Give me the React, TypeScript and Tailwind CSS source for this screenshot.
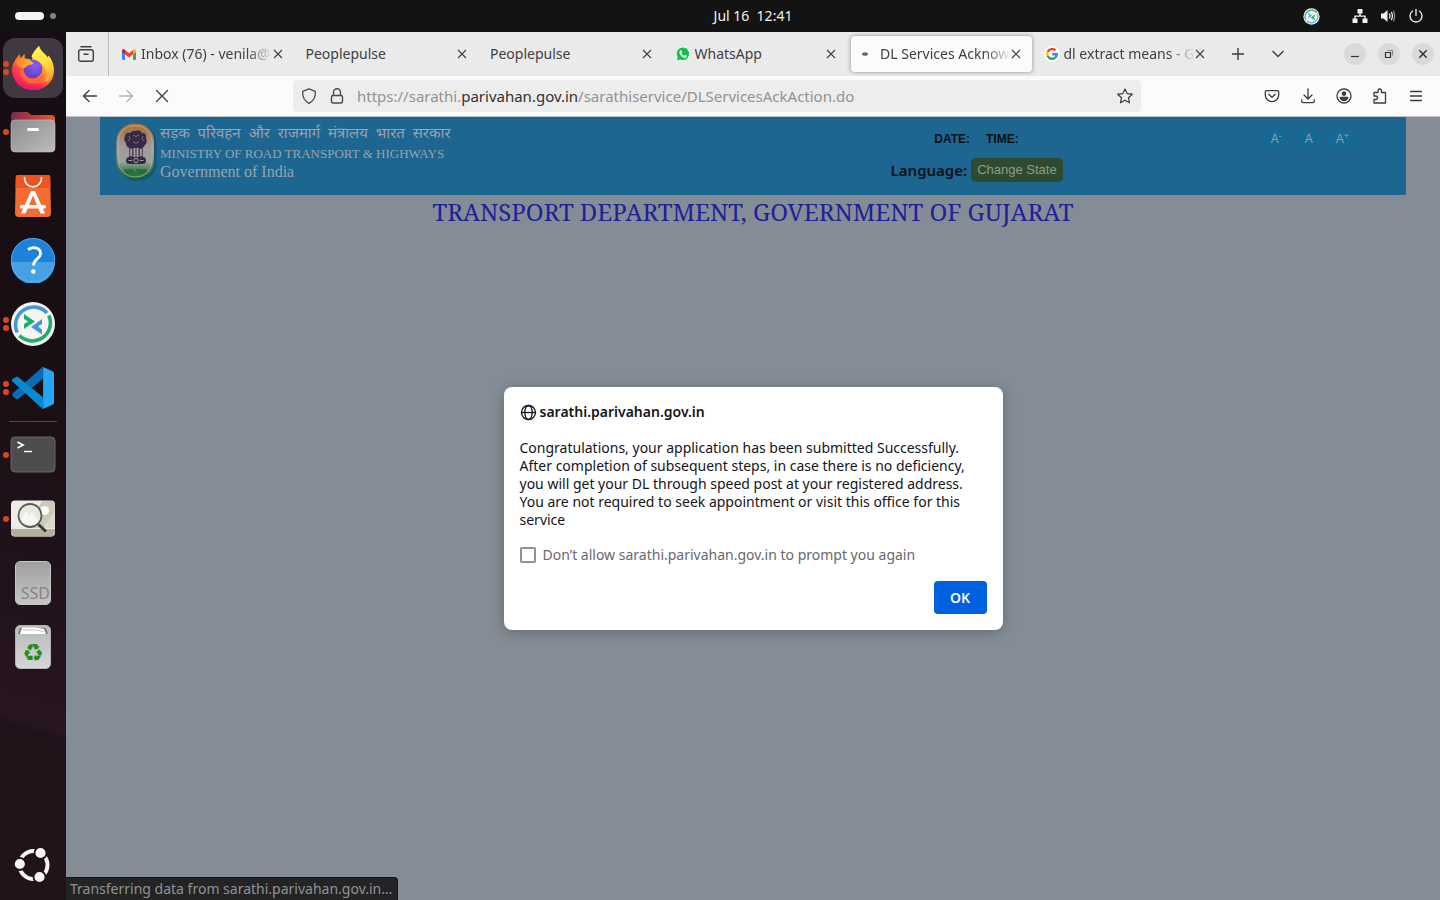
import { useState } from "react";
import type { ReactNode } from "react";

const ui = "font-['Noto_Sans','Open_Sans',sans-serif]";

function DockItem({ label, dots = 0, active = false, children }: { label: string; dots?: number; active?: boolean; children: ReactNode }) {
  return (
    <li className="relative">
      <button
        type="button"
        aria-label={label}
        className={`flex size-[60px] items-center justify-center rounded-xl ${active ? "bg-[#423841]" : ""}`}
      >
        {children}
      </button>
      <span className="absolute inset-y-0 left-0 flex flex-col justify-center gap-[2px]">
        {Array.from({ length: dots }, (_, i) => (
          <span key={i} className="size-[6px] rounded-full bg-[#d9481c]" />
        ))}
      </span>
    </li>
  );
}

function FirefoxIcon() {
  return (
    <svg width="46" height="46" viewBox="0 0 46 46" aria-hidden="true">
      <defs>
        <linearGradient id="fx-body" x1="0.9" y1="0.1" x2="0.2" y2="0.95">
          <stop offset="0" stopColor="#ffe84a" />
          <stop offset="0.3" stopColor="#ffb02e" />
          <stop offset="0.6" stopColor="#ff6a36" />
          <stop offset="0.85" stopColor="#fb2f50" />
          <stop offset="1" stopColor="#e6107a" />
        </linearGradient>
        <linearGradient id="fx-low" x1="0" y1="0" x2="0" y2="1">
          <stop offset="0.550" stopColor="#f5225c" stopOpacity="0" />
          <stop offset="1" stopColor="#e4127c" />
        </linearGradient>
        <radialGradient id="fx-globe" cx="0.62" cy="0.3" r="0.75">
          <stop offset="0" stopColor="#9059ff" />
          <stop offset="1" stopColor="#5a3fb5" />
        </radialGradient>
        <linearGradient id="fx-flame" x1="0.3" y1="0" x2="0.7" y2="1">
          <stop offset="0" stopColor="#fff652" />
          <stop offset="0.5" stopColor="#ffe040" />
          <stop offset="1" stopColor="#ffa42c" />
        </linearGradient>
        <linearGradient id="fx-head" x1="0" y1="0" x2="1" y2="0.5">
          <stop offset="0" stopColor="#ff6a2a" />
          <stop offset="1" stopColor="#ffb938" />
        </linearGradient>
      </defs>
      <path d="M9.500 9C9.500 11 10 12.500 11 13.300L14.500 9V13.500C17 13.500 20 14 22 15C22 9 26 5 29 1C30 6 36 9 38 13L38.500 10.500C42 15 44 20 44 25C44 37 35 45 23 45C11 45 2 36 2 25C2 21 3 18 5 15.500C6 13.500 8 11.500 9.500 9Z" fill="url(#fx-body)" />
      <path d="M2 25C2 36 11 45 23 45C35 45 44 37 44 25C42 33 34 38 25 38C14 38 6 32 2 25Z" fill="url(#fx-low)" />
      <path d="M29 1C30 6 36 9 38 13L38.500 10.500C43 16 45 24 41 31C39 35 37 36 35 37C38 31 36 24 33 20C30 16 24 15 21.500 11.500C23 7 26 4 29 1Z" fill="url(#fx-flame)" />
      <circle cx="23" cy="24" r="9.300" fill="url(#fx-globe)" />
      <path d="M14 20C12 25 14 33 22 34.500C28 35 32 31 33 28C34 35 28 39 22 38.500C13 38 9 30 11 22Z" fill="#ff6336" />
      <path d="M5 15.500C7 13 8.500 11 9.500 9C9.500 11 10 12.500 11 13.300L14.500 9V14C18 14 21 15.500 23.500 18.300C22.500 20 18.500 19.500 16.500 21.500C15 23 14 24 12 22.500C9 21.500 6 20 5 15.500Z" fill="url(#fx-head)" />
    </svg>
  );
}

function FilesIcon() {
  return (
    <svg width="46" height="44" viewBox="0 0 46 44" aria-hidden="true">
      <defs>
        <linearGradient id="files-back" x1="0" y1="0" x2="1" y2="0">
          <stop offset="0" stopColor="#7d2852" />
          <stop offset="1" stopColor="#ec5724" />
        </linearGradient>
        <linearGradient id="files-front" x1="0" y1="0" x2="1" y2="1">
          <stop offset="0" stopColor="#8b8b8b" />
          <stop offset="1" stopColor="#bdbdbd" />
        </linearGradient>
      </defs>
      <path d="M5 2H17C19 2 20 5 22 5H41Q45 5 45 9V20H1V6Q1 2 5 2Z" fill="url(#files-back)" />
      <rect x="1" y="10" width="44" height="32" rx="4" fill="url(#files-front)" stroke="#c4c4c4" strokeWidth="0.600" />
      <rect x="17" y="18" width="12" height="3" rx="1.500" fill="#fff" />
    </svg>
  );
}

function SoftwareIcon() {
  return (
    <svg width="38" height="44" viewBox="0 0 38 44" aria-hidden="true">
      <path d="M4 1H34Q36 1 36.200 3L37 39Q37 43 33 43H5Q1 43 1 39L1.800 3Q2 1 4 1Z" fill="#f26c34" />
      <path d="M4 1H34Q36 1 36.200 3L36.500 14H1.500L1.800 3Q2 1 4 1Z" fill="#ee5420" />
      <path d="M10.500 3.500C10.500 16 27.500 16 27.500 3.500" fill="none" stroke="#fff" strokeWidth="1.600" strokeLinecap="round" />
      <path d="M17 17H21L31 39.500H26.500L19 21.500L11.500 39.500H7Z" fill="#fff" />
      <rect x="6" y="31" width="26" height="3.600" rx="1.500" fill="#fff" />
    </svg>
  );
}

function HelpIcon() {
  return (
    <svg width="46" height="46" viewBox="0 0 46 46" aria-hidden="true">
      <circle cx="23" cy="23" r="22" fill="#1e82dc" />
      <path d="M1 25A22 22 0 0 0 45 25Z" fill="#45a0e4" />
      <circle cx="23" cy="23" r="21.600" fill="none" stroke="#5cb3ee" strokeWidth="0.800" />
      <path d="M18 12.500C24 9 30.500 11 30.500 16.500C30.500 22 23.500 22 23.500 28.500" fill="none" stroke="#fff" strokeWidth="2.800" />
      <circle cx="23.300" cy="34.500" r="2.300" fill="#fff" />
    </svg>
  );
}

function RemoteIcon({ size, flip = false }: { size: number; flip?: boolean }) {
  const upper = flip ? "#20ad72" : "#4695de";
  const lower = flip ? "#4ab0e4" : "#20ad72";
  return (
    <svg width={size} height={size} viewBox="0 0 46 46" aria-hidden="true">
      <circle cx="23" cy="23" r="22" fill="#f6f5f1" />
      <path d="M7.200 31.500A18 18 0 0 1 37 12" fill="none" stroke={upper} strokeWidth="3.600" />
      <path d="M38.800 14.500A18 18 0 0 1 9.500 34.500" fill="none" stroke={lower} strokeWidth="3.600" />
      <path d="M14 13L25 20.500L14 28V23L18 20.500L14 18Z" fill={lower} />
      <path d="M32 18V23L28 25.500L32 28.500V33.500L21 26Z" fill={upper} />
    </svg>
  );
}

function CodeIcon() {
  return (
    <svg width="44" height="44" viewBox="0 0 44 44" aria-hidden="true">
      <path d="M31.500 1L1.500 27.500V30L5 33Q6 33.500 7 33L33 12Z" fill="#0a6cb3" />
      <path d="M31.500 43L1 15V13.500L5 11Q6 10.500 7 11L33 32Z" fill="#0789d2" />
      <path d="M32 1L42 5.500Q43 6 43 7.500V36.500Q43 38 42 38.500L32 43Z" fill="#28a5ef" />
      <path d="M30 1.500Q32.500 1 32.500 3.500V41Q32.500 43.500 30 42.500L33 43V1Z" fill="#1785cc" />
    </svg>
  );
}

function TerminalIcon() {
  return (
    <svg width="46" height="38" viewBox="0 0 46 38" aria-hidden="true">
      <rect x="1" y="1" width="44" height="35" rx="4" fill="#4d4d4d" stroke="#686868" />
      <path d="M7.500 6L13 9L7.500 12" fill="none" stroke="#fff" strokeWidth="1.800" />
      <path d="M14 15.500H22" stroke="#fff" strokeWidth="1.400" />
    </svg>
  );
}

function ViewerIcon() {
  return (
    <svg width="46" height="40" viewBox="0 0 46 40" aria-hidden="true">
      <rect x="1" y="1.500" width="44" height="36" rx="4" fill="#eeede5" />
      <path d="M32 2H41Q45 2 45 6V29H17Z" fill="#cdcabc" />
      <path d="M45 12V29H33Z" fill="#dcdacf" />
      <path d="M1 30H45V33.500Q45 37.500 41 37.500H5Q1 37.500 1 33.500Z" fill="#b5af9d" />
      <circle cx="34.500" cy="11.500" r="4.500" fill="#fafaf7" />
      <circle cx="20" cy="16.500" r="11.500" fill="#e8e8e4" />
      <path d="M10 22L16 12L19 17L22 13L29 23Q21 31 10 22Z" fill="#fff" opacity="0.600" />
      <circle cx="20" cy="16.500" r="11.500" fill="none" stroke="#5b5b5b" strokeWidth="1.800" />
      <path d="M28.500 25.500L36 32.500" stroke="#3b3b3b" strokeWidth="3" />
    </svg>
  );
}

function DriveIcon() {
  return (
    <span className="flex h-[44px] w-[36px] items-end justify-end rounded-[5px] border border-[#c4c4c4] bg-linear-to-b from-[#a0a0a0] to-[#c6c6c6] text-base leading-[21px] text-[#858585]">
      SSD
    </span>
  );
}

function TrashIcon() {
  return (
    <span className="flex h-[44px] w-[36px] flex-col items-center rounded-[5px] border border-[#b4b4b4] bg-linear-to-b from-[#bababa] to-[#d6d6d6]">
      <svg width="30" height="9" viewBox="0 0 30 9" aria-hidden="true">
        <path d="M0 8L2 2H28L30 8Z" fill="#7a7a7a" />
        <path d="M2 8L4 1.500H17L26 3L28 8Z" fill="#fff" />
        <path d="M5 4H17L26 5.500" fill="none" stroke="#aaa" strokeWidth="0.700" />
      </svg>
      <span className="pt-[3px] font-['DejaVu_Sans',sans-serif] text-[24px] leading-[30px] text-[#278a20]">♻</span>
    </span>
  );
}

function UbuntuIcon() {
  return (
    <svg width="40" height="40" viewBox="0 0 40 40" aria-hidden="true">
      <circle cx="20.500" cy="20" r="14" fill="none" stroke="#f4f4f4" strokeWidth="4" />
      <g fill="#f4f4f4" stroke="#21131a" strokeWidth="1.800">
        <circle cx="6.800" cy="19" r="6" />
        <circle cx="27.500" cy="8" r="6" />
        <circle cx="26.500" cy="32" r="6" />
      </g>
    </svg>
  );
}

function Dock() {
  return (
    <nav
      aria-label="Dock"
      className={`${ui} flex w-[66px] shrink-0 flex-col items-center bg-[linear-gradient(197deg,#170c12_0%,#1a0f15_42%,#27151f_79%,#1f1219_80%,#21131a_100%)] pt-[6px] pb-[5px]`}
    >
      <ul className="flex flex-col gap-1">
        <DockItem label="Firefox" active dots={2}><FirefoxIcon /></DockItem>
        <DockItem label="Files" dots={1}><FilesIcon /></DockItem>
        <DockItem label="App Center"><SoftwareIcon /></DockItem>
        <DockItem label="Help"><HelpIcon /></DockItem>
        <DockItem label="Remote desktop" dots={2}><RemoteIcon size={46} /></DockItem>
        <DockItem label="Code" dots={2}><CodeIcon /></DockItem>
      </ul>
      <div className="my-[3px] h-px w-12 bg-[#51474d]" />
      <ul className="flex flex-col gap-1">
        <DockItem label="Terminal" dots={1}><TerminalIcon /></DockItem>
        <DockItem label="Image viewer" dots={1}><ViewerIcon /></DockItem>
        <DockItem label="SSD drive"><DriveIcon /></DockItem>
        <DockItem label="Trash"><TrashIcon /></DockItem>
      </ul>
      <ul className="mt-auto"><DockItem label="Show apps"><UbuntuIcon /></DockItem></ul>
    </nav>
  );
}

function TopBar() {
  return (
    <header className={`${ui} grid h-8 shrink-0 grid-cols-[1fr_auto_1fr] items-center bg-[#131313] text-[#f2f2f2]`}>
      <div className="flex items-center gap-[6px] pl-[15px]">
        <span className="h-2 w-[29px] rounded-full bg-[#f4f4f4]" />
        <span className="size-[6px] rounded-full bg-[#828282]" />
      </div>
      <time className="pl-[66px] text-sm leading-[18px] whitespace-pre">Jul 16  12:41</time>
      <div className="flex items-center justify-end gap-3 pr-4">
        <span className="mr-5"><RemoteIcon size={17} flip /></span>
        <svg width="16" height="16" viewBox="0 0 16 16" fill="#f2f2f2" aria-hidden="true">
          <path d="M5.500 1H10.500V5.500H8.700V7.500H13.700V10.500H15.500V15H10.500V10.500H12.300V8.800H3.700V10.500H5.500V15H.5V10.500H2.300V7.500H7.300V5.500H5.500Z" />
        </svg>
        <svg width="16" height="16" viewBox="0 0 16 16" aria-hidden="true">
          <path d="M1 5.500H3.500L7.500 2V14L3.500 10.500H1Z" fill="#f2f2f2" />
          <path d="M9.300 5.500Q10.800 8 9.300 10.500M11.300 4Q13.500 8 11.300 12" fill="none" stroke="#f2f2f2" strokeWidth="1.300" />
          <path d="M13.300 2.800Q16 8 13.300 13.200" fill="none" stroke="#909090" strokeWidth="1.200" />
        </svg>
        <svg width="16" height="16" viewBox="0 0 16 16" fill="none" stroke="#f2f2f2" strokeWidth="1.300" aria-hidden="true">
          <path d="M8 1V8M5 2.800A6 6 0 1 0 11 2.800" />
        </svg>
      </div>
    </header>
  );
}

function CloseGlyph() {
  return (
    <svg width="10" height="10" viewBox="0 0 10 10" fill="none" stroke="#3f3f3f" strokeWidth="1.100" aria-hidden="true">
      <path d="M1 1L9 9M9 1L1 9" />
    </svg>
  );
}

function GmailIcon() {
  return (
    <svg width="14" height="11" viewBox="0 0 14 11" aria-hidden="true">
      <path d="M0 2V10Q0 11 1 11H3V4.500Z" fill="#4285f4" />
      <path d="M14 2V10Q14 11 13 11H11V4.500Z" fill="#34a853" />
      <path d="M3 1V5.300L7 8.400L11 5.300V1L7 4.200Z" fill="#ea4335" />
      <path d="M0 2Q0 0 1.600 0L3 1V5.300L0 3Z" fill="#c5221f" />
      <path d="M14 2Q14 0 12.400 0L11 1V5.300L14 3Z" fill="#fbbc04" />
    </svg>
  );
}

function WhatsAppIcon() {
  return (
    <svg width="16" height="16" viewBox="0 0 16 16" aria-hidden="true">
      <path d="M8.200 1A6.800 6.800 0 1 1 5 14L1 15L2.200 11.200A6.800 6.800 0 0 1 8.200 1Z" fill="#10c148" stroke="#fff" strokeWidth="0.800" />
      <path d="M5.500 4.300C6.500 4 6.700 5.500 7 6C7 6.500 6.300 7 6.400 7.300C7 8.500 8 9.300 9 9.700C9.500 9.700 9.800 8.800 10.300 8.900C11 9.200 12 9.600 11.900 10.200C11.500 12 9.500 11.900 8.500 11.400C6.500 10.700 4.800 8.500 4.500 7C4.300 5.800 4.800 4.600 5.500 4.300Z" fill="#fff" />
    </svg>
  );
}

function GoogleIcon() {
  return (
    <svg width="16" height="16" viewBox="0 0 16 16" aria-hidden="true">
      <circle cx="8" cy="8" r="8" fill="#fff" />
      <g fill="none" strokeWidth="2.400">
        <path d="M11.400 4.300A4.800 4.800 0 0 0 3.700 5.900" stroke="#ea4335" />
        <path d="M3.700 5.900A4.800 4.800 0 0 0 3.700 10.100" stroke="#fbbc05" />
        <path d="M3.700 10.100A4.800 4.800 0 0 0 11.200 11.600" stroke="#34a853" />
        <path d="M11.200 11.600A4.800 4.800 0 0 0 12.800 8.200H8.200" stroke="#4285f4" />
      </g>
    </svg>
  );
}

function LoadingIcon() {
  return (
    <svg width="16" height="16" viewBox="0 0 16 16" aria-hidden="true"><ellipse cx="6" cy="8" rx="3" ry="1.800" fill="#686868" /></svg>
  );
}

type TabInfo = { title: string; icon?: ReactNode; active?: boolean; fade?: boolean };

const tabs: TabInfo[] = [
  { title: "Inbox (76) - venila@", icon: <GmailIcon />, fade: true },
  { title: "Peoplepulse" },
  { title: "Peoplepulse" },
  { title: "WhatsApp", icon: <WhatsAppIcon /> },
  { title: "DL Services Acknow", icon: <LoadingIcon />, active: true, fade: true },
  { title: "dl extract means - G", icon: <GoogleIcon />, fade: true },
];

function Tab({ tab }: { tab: TabInfo }) {
  return (
    <li className="flex min-w-0 flex-1 px-[2px] py-1">
      <div className={`flex min-w-0 flex-1 items-center rounded-[4px] pr-[11px] pl-2 ${tab.active ? "bg-[#fbfbfb] shadow-[0_0_4px_rgba(0,0,0,0.4)]" : ""}`}>
        {tab.icon && <span className={`flex w-4 shrink-0 justify-center ${tab.active ? "mr-[5px]" : "mr-1"}`}>{tab.icon}</span>}
        <a
          href="#tab"
          className={`min-w-0 flex-1 overflow-hidden text-sm whitespace-nowrap text-[#3f3f3f] ${tab.fade ? "mask-r-from-80% mask-r-to-100%" : ""}`}
        >
          {tab.title}
        </a>
        <button type="button" aria-label={`Close ${tab.title}`} className="shrink-0"><CloseGlyph /></button>
      </div>
    </li>
  );
}

function TabStrip() {
  return (
    <div className="flex h-11 shrink-0 items-stretch bg-[#eaeaea]">
      <button type="button" aria-label="Recent browsing" className="flex w-[43px] shrink-0 items-center justify-center border-r border-[#bababa] pr-[2px]">
        <svg width="18" height="18" viewBox="0 0 18 18" fill="none" stroke="#404040" strokeWidth="1.400" aria-hidden="true">
          <path d="M4 1.700H14M7 9.300H11" strokeLinecap="round" />
          <rect x="1.700" y="4.700" width="14.600" height="11.600" rx="2" />
        </svg>
      </button>
      <ul className="flex min-w-0 flex-1 pl-[2px]">
        {tabs.map((tab, i) => <Tab key={i} tab={tab} />)}
      </ul>
      <div className="flex shrink-0 items-center pr-[6px]">
        <button type="button" aria-label="New tab" className="flex w-10 justify-center">
          <svg width="14" height="14" viewBox="0 0 14 14" stroke="#3c3c3c" strokeWidth="1.400" aria-hidden="true"><path d="M7 1V13M1 7H13" /></svg>
        </button>
        <button type="button" aria-label="List all tabs" className="mr-[46px] flex w-10 justify-center">
          <svg width="14" height="14" viewBox="0 0 14 14" fill="none" stroke="#3c3c3c" strokeWidth="1.400" aria-hidden="true"><path d="M1.500 4L7 9.500L12.500 4" /></svg>
        </button>
        <div className="flex gap-3">
          <button type="button" aria-label="Minimize" className="flex size-[22px] items-center justify-center rounded-full bg-[#dadada]">
            <svg width="10" height="10" viewBox="0 0 10 10" stroke="#333" strokeWidth="1.200" aria-hidden="true"><path d="M1 7.500H9" /></svg>
          </button>
          <button type="button" aria-label="Restore" className="flex size-[22px] items-center justify-center rounded-full bg-[#dadada]">
            <svg width="10" height="10" viewBox="0 0 10 10" fill="none" stroke="#333" strokeWidth="1.200" aria-hidden="true"><path d="M1.500 3.500H6.500V8.500H1.500Z" /><path d="M3.500 1.500H8.500V6.500" stroke="#888" /></svg>
          </button>
          <button type="button" aria-label="Close window" className="flex size-[22px] items-center justify-center rounded-full bg-[#dadada]">
            <svg width="10" height="10" viewBox="0 0 10 10" stroke="#333" strokeWidth="1.500" aria-hidden="true"><path d="M1.300 1.300L8.700 8.700M8.700 1.300L1.300 8.700" /></svg>
          </button>
        </div>
      </div>
    </div>
  );
}

function ToolButton({ label, muted = false, children }: { label: string; muted?: boolean; children: ReactNode }) {
  return (
    <button type="button" aria-label={label} className="flex size-9 shrink-0 items-center justify-center">
      <svg width="16" height="16" viewBox="0 0 16 16" fill="none" stroke={muted ? "#b4b4b4" : "#3c3c3c"} strokeWidth="1.300" strokeLinecap="round" strokeLinejoin="round" aria-hidden="true">
        {children}
      </svg>
    </button>
  );
}

function Toolbar() {
  return (
    <div className="flex h-[41px] shrink-0 items-center border-b border-[#c4c4c4] bg-[#fbfbfb] px-[6px]">
      <ToolButton label="Back"><path d="M14.500 8H1.500M7 2.500L1.500 8L7 13.500" /></ToolButton>
      <ToolButton label="Forward" muted><path d="M1.500 8H14.500M9 2.500L14.500 8L9 13.500" /></ToolButton>
      <ToolButton label="Stop"><path d="M2.500 2.500L13.500 13.500M13.500 2.500L2.500 13.500" /></ToolButton>
      <div className="flex-[113]" />
      <div className="flex h-8 min-w-0 flex-[832] items-center gap-3 rounded-[4px] bg-[#ededed] px-2">
        <svg width="16" height="16" viewBox="0 0 16 16" fill="none" stroke="#4a4a4a" strokeWidth="1.300" strokeLinejoin="round" aria-hidden="true" className="shrink-0">
          <path d="M8 .8L14.300 3.300Q15 12 8 15.300Q1 12 1.700 3.300Z" />
        </svg>
        <svg width="16" height="16" viewBox="0 0 16 16" fill="none" stroke="#4a4a4a" strokeWidth="1.400" aria-hidden="true" className="shrink-0">
          <rect x="2.500" y="7.500" width="11" height="7.500" rx="1.500" /><path d="M4.500 7.500V4.300A3.500 3.500 0 0 1 11.500 4.300V7.500" />
        </svg>
        <a href="#address" className="min-w-0 flex-1 overflow-hidden pb-px text-[15px] leading-5 whitespace-nowrap text-[#929292]">
          https://sarathi.<span className="text-[#303030]">parivahan.gov.in</span>/sarathiservice/DLServicesAckAction.do
        </a>
        <button type="button" aria-label="Bookmark this page" className="shrink-0">
          <svg width="16" height="16" viewBox="0 0 16 16" fill="none" stroke="#3c3c3c" strokeWidth="1.200" strokeLinejoin="round" aria-hidden="true"><path d="M8 1L10.100 5.600L15.300 6.200L11.500 9.700L12.500 14.800L8 12.300L3.500 14.800L4.500 9.700L.7 6.200L5.900 5.600Z" /></svg>
        </button>
      </div>
      <div className="flex-[113]" />
      <ToolButton label="Save to Pocket"><path d="M2.500 2.700H13.500Q14.700 2.700 14.700 4V7A6.700 6.700 0 0 1 1.300 7V4Q1.300 2.700 2.500 2.700ZM4.800 6.200L8 9.300L11.200 6.200" /></ToolButton>
      <ToolButton label="Downloads"><path d="M8 .8V10.500M4 7L8 11L12 7M1.700 12V13Q1.700 14.700 3.400 14.700H12.600Q14.300 14.700 14.300 13V12" /></ToolButton>
      <ToolButton label="Account"><circle cx="8" cy="8" r="7" /><circle cx="8" cy="5.600" r="1.700" fill="#3c3c3c" /><path d="M4.200 9.500H11.800Q11 12.500 8 12.500Q5 12.500 4.200 9.500Z" fill="#3c3c3c" /></ToolButton>
      <ToolButton label="Extensions"><path d="M2 4.500H6V3Q6 1 7.800 1Q9.500 1 9.500 3V4.500H13.500V15H2V11.500H3.500Q5.500 11.500 5.500 9.800Q5.500 8 3.500 8H2Z" /></ToolButton>
      <ToolButton label="Menu"><path d="M2.500 3.500H13.500M2.500 8H13.500M2.500 12.500H13.500" /></ToolButton>
    </div>
  );
}

function Emblem() {
  return (
    <svg width="41" height="60" viewBox="0 0 41 60" aria-hidden="true" className="shrink-0">
      <defs>
        <linearGradient id="flag" x1="0" y1="0" x2="0" y2="1">
          <stop offset="0.100" stopColor="#a87848" />
          <stop offset="0.400" stopColor="#a09a9a" />
          <stop offset="0.700" stopColor="#9aa39c" />
          <stop offset="0.920" stopColor="#27773a" />
        </linearGradient>
        <linearGradient id="flag-rim" x1="0" y1="0" x2="0" y2="1">
          <stop offset="0" stopColor="#b46e28" />
          <stop offset="0.500" stopColor="#aaa6a0" />
          <stop offset="1" stopColor="#136820" />
        </linearGradient>
      </defs>
      <rect x="2.500" y="3" width="38" height="56" rx="18" fill="#174c6d" opacity="0.700" />
      <rect x="0.500" y="1.500" width="37.500" height="55.500" rx="18" fill="url(#flag-rim)" />
      <rect x="2.500" y="3.500" width="33.500" height="51.500" rx="16" fill="url(#flag)" stroke="#b6aca0" strokeWidth="0.800" />
      <g fill="#382a45">
        <path d="M14 11Q17 8 19.500 9Q24 7 26 11Q31 11 30 16Q32 20 29 23Q27 27 24 26H15Q10 26 10 21Q7 18 9 14Q10 10 14 11Z" />
        <path d="M13 24H27V36H13Z" opacity="0.700" />
        <rect x="10" y="35" width="20" height="7" rx="3.500" />
      </g>
      <g fill="none" stroke="#a9a0a6" strokeWidth="1">
        <path d="M15 27V34M18.500 26V35M21.500 26V35M25 27V34" strokeWidth="1.600" />
        <circle cx="20" cy="38.500" r="2.200" />
        <path d="M12.500 38.500H16M24 38.500H27.500" />
        <path d="M13 14Q15 17 12 19M27 14Q25 17 28 19M17 13Q20 16 23 13M17 20Q20 22 23 20" opacity="0.600" />
      </g>
      <path d="M9 48H18M20 48H31M10 50H17M22 50H30" stroke="#2a3f35" strokeWidth="1.200" strokeDasharray="2 0.700" />
    </svg>
  );
}

function SiteHeader() {
  return (
    <div className="mx-[34px] grid h-[78px] grid-cols-[auto_1fr_auto] bg-[#1d6691]">
      <div className="flex pt-[5px] pl-4">
        <Emblem />
        <div className="pl-[3px] font-['Liberation_Serif',serif] text-[#9ba3ab]">
          <p lang="hi" className="pt-[3px] font-['Noto_Sans_Devanagari','Lohit_Devanagari',sans-serif] text-[15px] leading-5 whitespace-pre">सड़क  परिवहन  और  राजमार्ग  मंत्रालय  भारत  सरकार</p>
          <p className="text-[13px] leading-[18px]">MINISTRY OF ROAD TRANSPORT &amp; HIGHWAYS</p>
          <p className="text-base leading-[18px]">Government of India</p>
        </div>
      </div>
      <div className="flex flex-col items-end pt-[13px] pr-[200px] font-['Liberation_Sans',sans-serif] text-[#0c1114]">
        <div className="flex gap-4 pr-11 text-xs leading-[18px] font-bold">
          <span>DATE:</span>
          <span>TIME:</span>
        </div>
        <div className="flex items-center gap-1 pt-[10px]">
          <span className="font-['Noto_Sans',sans-serif] text-[15px] leading-5 font-semibold">Language:</span>
          <button type="button" className="h-6 rounded-[5px] bg-[#2e4b30] px-[6px] text-[13px] text-[#929a8e]">Change State</button>
        </div>
      </div>
      <div className="flex gap-[7px] pt-[13px] pr-[49px] font-['Liberation_Sans',sans-serif] text-xs text-[#8fa1ad]">
        <button type="button" aria-label="Smaller text" className="h-[18px] rounded-[6px] bg-[#156a95] px-2 leading-[18px]">A<sup>-</sup></button>
        <button type="button" aria-label="Normal text" className="h-[18px] rounded-[6px] bg-[#156a95] px-2 leading-[18px]">A</button>
        <button type="button" aria-label="Larger text" className="h-[18px] rounded-[6px] bg-[#156a95] px-2 leading-[18px]">A<sup>+</sup></button>
      </div>
    </div>
  );
}

function PromptDialog() {
  const [open, setOpen] = useState(true);
  if (!open) return null;
  return (
    <div className="absolute inset-0 flex items-center justify-center">
      <div role="dialog" aria-labelledby="prompt-title" className="flex w-[499px] flex-col rounded-lg bg-white p-4 text-[#15141a] shadow-[0_2px_14px_rgba(0,0,0,0.25)]">
        <div className="flex items-center gap-[3px]">
          <svg width="17" height="17" viewBox="0 0 17 17" fill="none" stroke="#15141a" strokeWidth="1.300" aria-hidden="true">
            <circle cx="8.500" cy="8.500" r="7" /><ellipse cx="8.500" cy="8.500" rx="3.700" ry="7" /><path d="M1.500 8.500H15.500" />
          </svg>
          <h2 id="prompt-title" className="text-sm leading-[18px] font-semibold">sarathi.parivahan.gov.in</h2>
        </div>
        <p className="pt-[18px] text-sm leading-[18px]">
          Congratulations, your application has been submitted Successfully.<br />
          After completion of subsequent steps, in case there is no deficiency,<br />
          you will get your DL through speed post at your registered address.<br />
          You are not required to seek appointment or visit this office for this<br />
          service
        </p>
        <label className="flex items-center gap-[7px] pt-4 text-sm leading-5 text-[#69686d]">
          <input type="checkbox" className="size-4 appearance-none rounded-[2px] border-2 border-[#8f8f9d] bg-white checked:bg-[#0061e0]" />
          Don’t allow sarathi.parivahan.gov.in to prompt you again
        </label>
        <button type="button" onClick={() => setOpen(false)} className="mt-4 h-[33px] w-[53px] self-end rounded-[4px] bg-[#0061e0] text-sm font-semibold text-[#fbfbfe]">OK</button>
      </div>
    </div>
  );
}

export default function App() {
  return (
    <div className="flex min-h-screen flex-col">
      <TopBar />
      <div className="flex flex-1">
        <Dock />
        <div className={`${ui} flex min-w-0 flex-1 flex-col`}>
          <TabStrip />
          <Toolbar />
          <main className="relative flex-1 bg-[#848d95]">
            <SiteHeader />
            <h1 className="text-center font-['Noto_Serif','Liberation_Serif',serif] text-2xl leading-[34px] text-[#20209a]">TRANSPORT DEPARTMENT, GOVERNMENT OF GUJARAT</h1>
            <PromptDialog />
            <div role="status" className="absolute bottom-0 left-0 rounded-tr-[4px] border-t border-r border-[#14141a] bg-[#242426] py-px pr-[5px] pl-1 text-sm text-[#929292]">
              Transferring data from sarathi.parivahan.gov.in…
            </div>
          </main>
        </div>
      </div>
    </div>
  );
}
